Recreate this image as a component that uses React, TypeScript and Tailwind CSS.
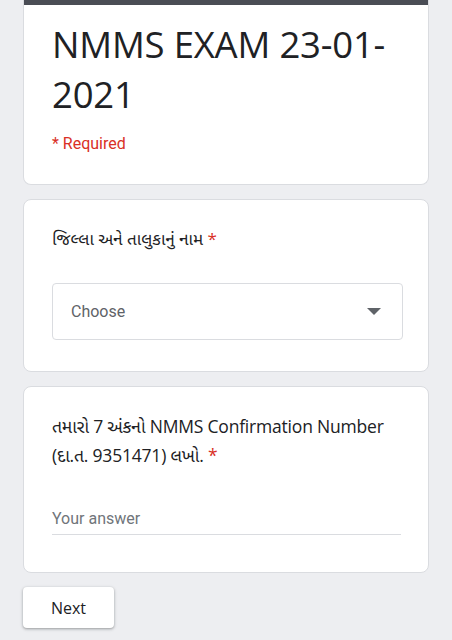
import React from 'react';

const sans = { fontFamily: '"Open Sans", "Noto Sans Gujarati", "Noto Sans", sans-serif' };
const roboto = { fontFamily: 'Roboto, "Noto Sans Gujarati", "Noto Sans", sans-serif' };

const Card: React.FC<{ children: React.ReactNode; className?: string }> = ({ children, className = '' }) => (
  <div className={`bg-white border border-[#dadce0] rounded-lg ${className}`}>{children}</div>
);

const App: React.FC = () => {
  return (
    <div className="min-h-screen w-full bg-[#edeef1] px-[23px] pb-4">
      <div className="flex flex-col gap-[14px]">
        <div className="bg-white border border-[#dadce0] border-t-0 rounded-b-lg overflow-hidden">
          <div className="h-[5px] bg-[#4a4d55]" />
          <div className="px-[28px] pt-[14px] pb-[28px]">
            <h1 className="text-[36.5px] leading-[50px] text-[#202124] tracking-[-0.2px]" style={sans}>
              NMMS EXAM 23-01-2021
            </h1>
            <p className="mt-[13px] text-[16px] leading-[24px] text-[#d93025]" style={roboto}>
              * Required
            </p>
          </div>
        </div>

        <Card className="px-[28px] pt-[26px] pb-[31px]">
          <div className="text-[17px] leading-[26px] text-[#202124]" style={sans}>
            જિલ્લા અને તાલુકાનું નામ <span className="text-[#d93025]">*</span>
          </div>
          <div className="mt-[31px] h-[57px] w-[351px] border border-[#dadce0] rounded flex items-center justify-between pl-[18px] pr-[21px]">
            <span className="text-[16px] text-[#5f6368]" style={roboto}>Choose</span>
            <svg width="14" height="7" viewBox="0 0 14 7">
              <path d="M0 0 L14 0 L7 7 Z" fill="#5f6368" />
            </svg>
          </div>
        </Card>

        <Card className="px-[28px] pt-[25px] pb-[37px]">
          <div className="text-[17.5px] leading-[29px] text-[#202124] tracking-[-0.2px]" style={sans}>
            તમારો 7 અંકનો NMMS Confirmation Number (દા.ત. 9351471) લખો.{' '}
            <span className="text-[#d93025]">*</span>
          </div>
          <div className="mt-[36px] w-[349px] border-b border-[#dadce0] pb-[3px]">
            <span className="text-[16px] leading-[24px] text-[#70757a]" style={roboto}>Your answer</span>
          </div>
        </Card>

        <div>
          <button
            className="w-[91px] h-[41px] bg-white rounded shadow-[0_1px_2px_rgba(60,64,67,0.3),0_1px_3px_1px_rgba(60,64,67,0.15)] text-[16px] text-[#202124]"
            style={sans}
          >
            Next
          </button>
        </div>
      </div>
    </div>
  );
};

export default App;
